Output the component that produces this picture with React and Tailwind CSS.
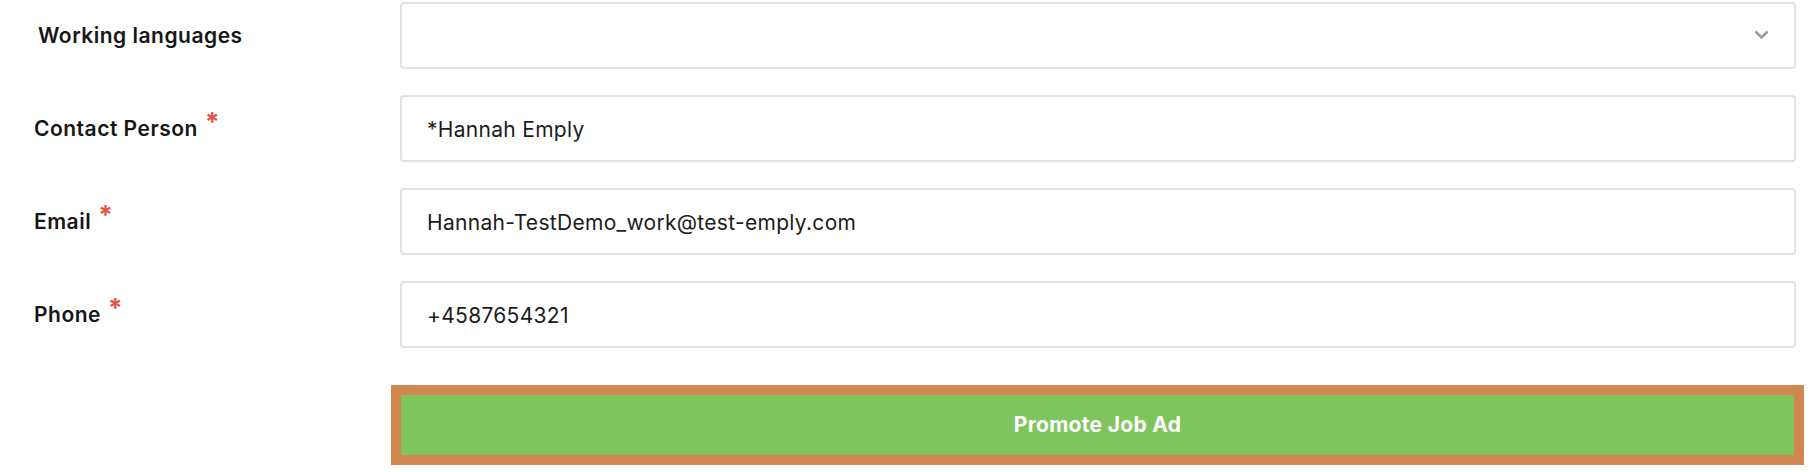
import React from 'react';

const fields = [
  { label: 'Working languages', value: '', select: true, required: false },
  { label: 'Contact Person', value: '*Hannah Emply', required: true },
  { label: 'Email', value: 'Hannah-TestDemo_work@test-emply.com', required: true },
  { label: 'Phone', value: '+4587654321', required: true },
];

function Label({ text, required, indent }) {
  return (
    <div className={`flex items-center w-[400px] shrink-0 ${indent ? 'pl-[38px]' : 'pl-[34px]'}`}>
      <span className="text-[21px] font-semibold text-[#161616] leading-none tracking-[0.5px]">{text}</span>
      {required && (
        <span className="ml-[7px] -mt-[14px] text-[26px] leading-none font-bold text-[#e5534b]">*</span>
      )}
    </div>
  );
}

export default function App() {
  return (
    <div
      className="w-[1810px] h-[472px] bg-white overflow-hidden"
      style={{ fontFamily: 'Inter, "Liberation Sans", sans-serif' }}
    >
      <div className="flex flex-col gap-[26px] pt-[2px] pr-[14px]">
        {fields.map((f) => (
          <div key={f.label} className="flex">
            <Label text={f.label} required={f.required} indent={f.select} />
            <div className="flex-1 h-[67px] flex items-center justify-between border-2 border-[#e2e2e2] rounded-[4px] pl-[25px] pr-[25px]">
              <span className="text-[21px] text-[#1c1c1c] pt-[3px] tracking-[0.3px]">{f.value}</span>
              {f.select && (
                <svg width="15" height="10" viewBox="0 0 15 10" className="-mt-[2px]">
                  <polyline points="1.5,1.5 7.5,7.5 13.5,1.5" fill="none" stroke="#9b9b9b" strokeWidth="2.6" />
                </svg>
              )}
            </div>
          </div>
        ))}
      </div>
      <div className="flex pr-[16px] pt-[47px]">
        <div className="w-[401px] shrink-0" />
        <button className="flex-1 h-[60px] bg-[#7fc55e] ring-[10px] ring-[#d0884f] text-white text-[21px] font-bold tracking-[0.3px]">
          Promote Job Ad
        </button>
      </div>
    </div>
  );
}
